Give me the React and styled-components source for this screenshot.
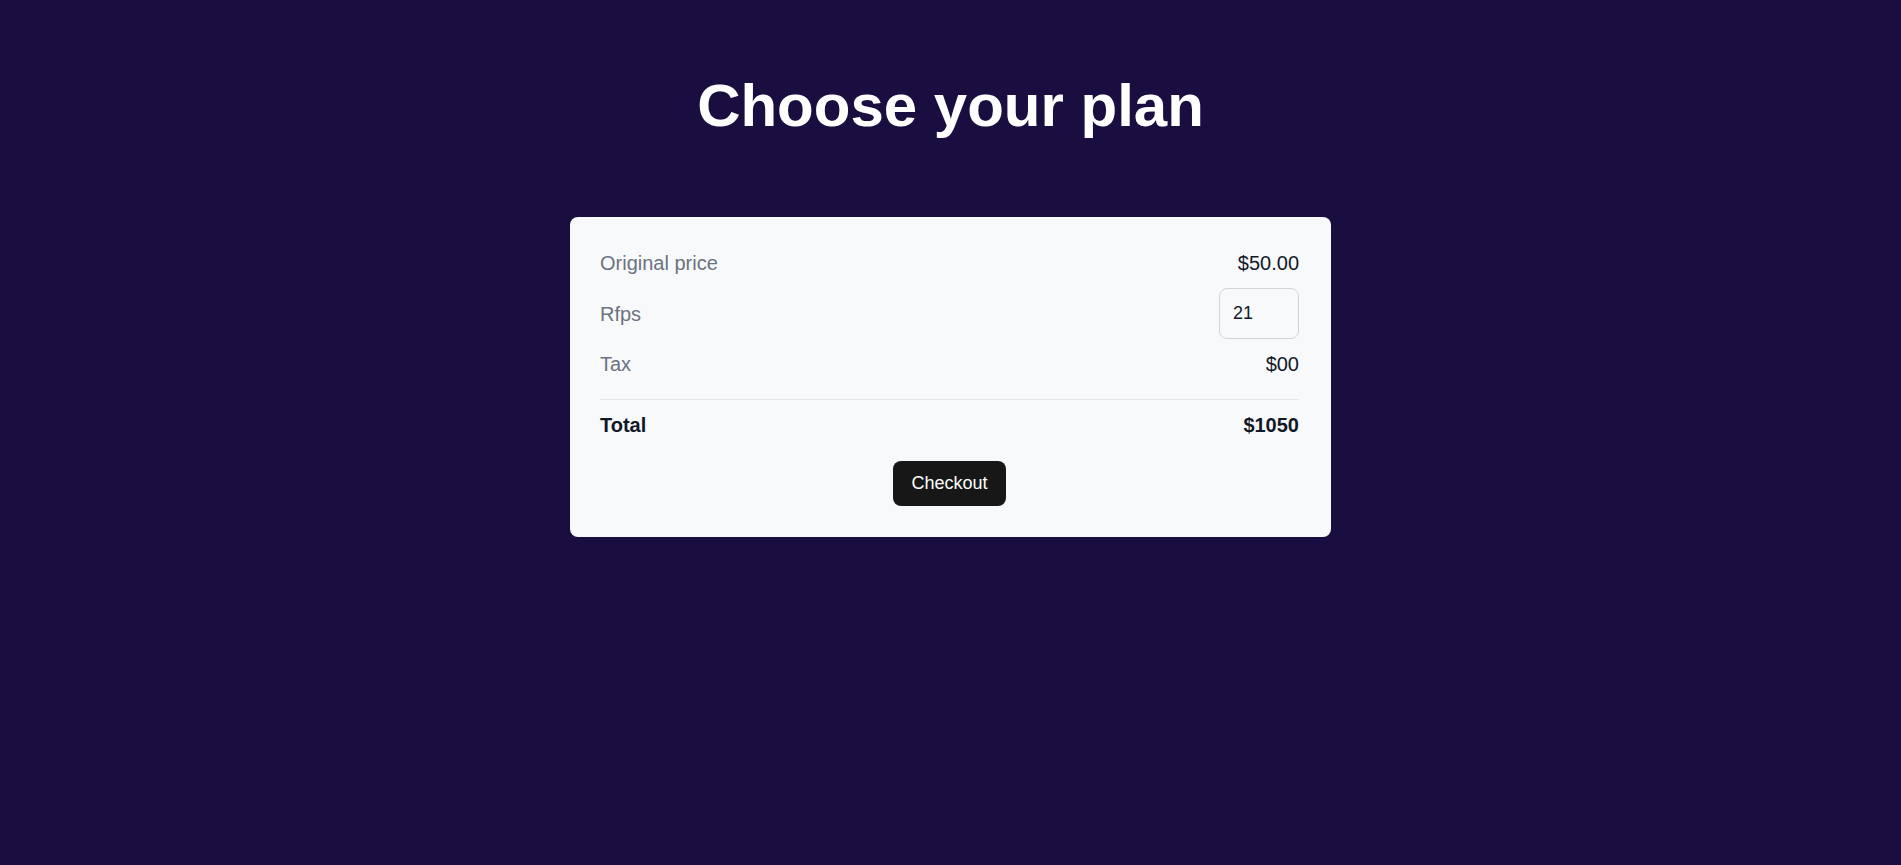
import React, { useState } from "react";
import styled, { createGlobalStyle } from "styled-components";

const GlobalStyle = createGlobalStyle`
  html, body {
    margin: 0;
    padding: 0;
    background: #1a0d3f;
    font-family: "Liberation Sans", Arial, sans-serif;
  }
  * { box-sizing: border-box; }
`;

const Page = styled.main`
  min-height: 865px;
  background: #1a0d3f;
  padding-top: 70px;
  display: flex;
  flex-direction: column;
  align-items: center;
`;

const Title = styled.h1`
  margin: 0 0 75px;
  font-size: 60px;
  line-height: 72px;
  font-weight: 700;
  color: #ffffff;
`;

const Card = styled.section`
  width: 761px;
  background: #f8f9fa;
  border-radius: 8px;
  padding: 31px 32px 31px 30px;
  display: flex;
  flex-direction: column;
  gap: 10px;
`;

const Row = styled.div`
  display: flex;
  align-items: center;
  justify-content: space-between;
  font-size: 20px;
  line-height: 30px;
`;

const Label = styled.span`
  color: ${(p) => (p.$strong ? "#111827" : "#6b7280")};
  font-weight: ${(p) => (p.$strong ? 700 : 400)};
`;

const Value = styled.span`
  color: #111827;
  font-weight: ${(p) => (p.$strong ? 700 : 400)};
`;

const QtyInput = styled.input`
  width: 80px;
  height: 51px;
  padding: 0 13px;
  border: 1px solid #d1d5db;
  border-radius: 8px;
  background: #f8f9fa;
  font-family: "Liberation Sans", Arial, sans-serif;
  font-size: 18px;
  color: #111827;
  outline: none;
`;

const Divider = styled.hr`
  margin: 10px 0 0;
  border: 0;
  border-top: 1px solid #e5e7eb;
  height: 0;
`;

const Actions = styled.div`
  display: flex;
  justify-content: center;
  margin-top: 11px;
`;

const CheckoutButton = styled.button`
  background: #171717;
  color: #ffffff;
  border: 0;
  border-radius: 8px;
  padding: 12px 18px;
  height: 45px;
  font-family: "Liberation Sans", Arial, sans-serif;
  font-size: 18px;
  line-height: 21px;
  cursor: pointer;
`;

export default function App() {
  const [rfps, setRfps] = useState("21");
  return (
    <>
      <GlobalStyle />
      <Page>
        <Title>Choose your plan</Title>
        <Card>
          <Row>
            <Label>Original price</Label>
            <Value>$50.00</Value>
          </Row>
          <Row>
            <Label>Rfps</Label>
            <QtyInput value={rfps} onChange={(e) => setRfps(e.target.value)} />
          </Row>
          <Row>
            <Label>Tax</Label>
            <Value>$00</Value>
          </Row>
          <Divider />
          <Row>
            <Label $strong>Total</Label>
            <Value $strong>$1050</Value>
          </Row>
          <Actions>
            <CheckoutButton>Checkout</CheckoutButton>
          </Actions>
        </Card>
      </Page>
    </>
  );
}
